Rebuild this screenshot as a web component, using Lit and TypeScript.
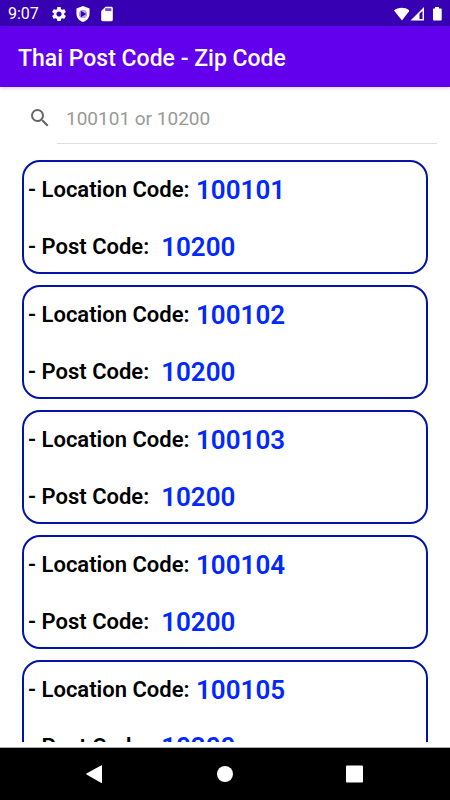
import { LitElement, html, css } from "lit";
import { customElement, property, state } from "lit/decorators.js";

interface Place {
  location: string;
  post: string;
}

const PLACES: Place[] = [
  { location: "100101", post: "10200" },
  { location: "100102", post: "10200" },
  { location: "100103", post: "10200" },
  { location: "100104", post: "10200" },
  { location: "100105", post: "10200" },
];

@customElement("status-bar")
class StatusBar extends LitElement {
  static styles = css`
    :host {
      display: flex;
      align-items: center;
      justify-content: space-between;
      height: 26px;
      flex: none;
      box-sizing: border-box;
      padding: 2px 8px 0;
      background: #3700b3;
      color: #fff;
      font-size: 16px;
      line-height: 24px;
    }
    .left,
    .right {
      display: flex;
      align-items: center;
    }
    .time {
      margin-right: 12px;
    }
    .note {
      width: 16px;
      height: 16px;
      margin-right: 8px;
    }
    .sys {
      width: 16px;
      height: 16px;
    }
    .battery {
      width: 10px;
      height: 16px;
      margin-left: 7px;
    }
    svg {
      display: block;
      fill: currentColor;
    }
  `;

  render() {
    return html`
      <div class="left">
        <span class="time">9:07</span>
        <svg class="note" viewBox="1 1 22 22" aria-hidden="true">
          <path d="M19.14 12.94c.04-.3.06-.61.06-.94 0-.32-.02-.64-.07-.94l2.03-1.58c.18-.14.23-.41.12-.61l-1.92-3.32c-.12-.22-.37-.29-.59-.22l-2.39.96c-.5-.38-1.03-.7-1.62-.94l-.36-2.54c-.04-.24-.24-.41-.48-.41h-3.84c-.24 0-.43.17-.47.41l-.36 2.54c-.59.24-1.13.57-1.62.94l-2.39-.96c-.22-.08-.47 0-.59.22L2.74 8.87c-.12.21-.08.47.12.61l2.03 1.58c-.05.3-.09.63-.09.94s.02.64.07.94l-2.03 1.58c-.18.14-.23.41-.12.61l1.92 3.32c.12.22.37.29.59.22l2.39-.96c.5.38 1.03.7 1.62.94l.36 2.54c.05.24.24.41.48.41h3.84c.24 0 .44-.17.47-.41l.36-2.54c.59-.24 1.13-.56 1.62-.94l2.39.96c.22.08.47 0 .59-.22l1.92-3.32c.12-.22.07-.47-.12-.61l-2.01-1.58zM12 15.6c-1.98 0-3.6-1.62-3.6-3.6s1.62-3.6 3.6-3.6 3.6 1.62 3.6 3.6-1.62 3.6-3.6 3.6z"/>
        </svg>
        <svg class="note" viewBox="1 1 22 22" aria-hidden="true">
          <path fill-rule="evenodd" d="M12 1L3 4.500v7c0 5.300 3.800 9.900 9 11.500 5.200-1.600 9-6.200 9-11.500v-7L12 1zM12 6.500a5.500 5.500 0 1 0 .01 0z"/>
          <path fill="#fff" fill-opacity=".65" d="M12 6.500a5.500 5.500 0 1 0 .01 0z"/>
          <path fill="#3700b3" d="M9 7.500v9l7.500-4.500z"/>
        </svg>
        <svg class="note" viewBox="1 1 22 22" aria-hidden="true">
          <path d="M18 2h-8L4 8v12c0 1.100.9 2 2 2h12c1.100 0 2-.9 2-2V4c0-1.100-.9-2-2-2z"/>
          <path fill="#3700b3" fill-opacity=".7" d="M9.500 4h8.500v4H9.500z"/>
        </svg>
      </div>
      <div class="right">
        <svg class="sys" viewBox="0 0 16 16" aria-hidden="true">
          <path d="M1 4.500C5 .9 12 .9 16.500 4.500L9 14.500z"/>
        </svg>
        <svg class="sys" viewBox="0 0 16 16" aria-hidden="true">
          <path fill-rule="evenodd" d="M1.500 14.500L15 1v13.500zM10.500 7.500V13H13.500V5z"/>
        </svg>
        <svg class="battery" viewBox="0 0 10 16" aria-hidden="true">
          <path d="M3 1h4v1.500h2c.4 0 .7.300.7.700v10.600c0 .4-.3.700-.7.700H1.700c-.4 0-.7-.3-.7-.7V3.200c0-.4.300-.7.700-.7H3z"/>
        </svg>
      </div>
    `;
  }
}

@customElement("code-card")
class CodeCard extends LitElement {
  @property({ attribute: false }) place!: Place;

  static styles = css`
    :host {
      display: block;
      border: 2px solid #0014a8;
      border-radius: 18px;
      padding: 8px 4px 5px;
      background: #fff;
    }
    dl {
      display: grid;
      row-gap: 17px;
      margin: 0;
    }
    .row {
      display: flex;
      align-items: center;
      column-gap: 1px;
      line-height: 40px;
      font-weight: 600;
    }
    dt {
      color: #000;
      font-size: 22px;
      white-space: pre;
    }
    dd {
      margin: 0;
      color: #0028ff;
      font-size: 26px;
    }
  `;

  render() {
    return html`
      <dl>
        <div class="row">
          <dt>- Location Code: </dt>
          <dd>${this.place.location}</dd>
        </div>
        <div class="row">
          <dt>- Post Code:  </dt>
          <dd>${this.place.post}</dd>
        </div>
      </dl>
    `;
  }
}

@customElement("app-root")
class AppRoot extends LitElement {
  @state() private query = "";

  static styles = css`
    :host {
      display: flex;
      flex-direction: column;
      height: 100vh;
      overflow: hidden;
      background: #fff;
      font-family: Roboto, "Liberation Sans", sans-serif;
    }
    .bar {
      flex: none;
      height: 61px;
      padding: 0 18px;
      background: #6200ee;
      box-shadow: 0 1px 4px rgba(0, 0, 0, 0.2);
    }
    h1 {
      margin: 0;
      color: #fff;
      font-size: 23px;
      font-weight: 500;
      line-height: 65px;
    }
    .search {
      flex: none;
      display: flex;
      align-items: center;
      height: 57px;
      margin: 0 13px 0 28px;
    }
    .search svg {
      flex: none;
      width: 24px;
      height: 24px;
      margin: 4px 5px 0 0;
      fill: #666;
    }
    .search input {
      flex: 1;
      min-width: 0;
      box-sizing: border-box;
      height: 57px;
      padding: 7px 9px 0;
      border: 0;
      border-bottom: 1px solid #dedede;
      outline: 0;
      background: none;
      color: #222;
      font: 400 19px Roboto, "Liberation Sans", sans-serif;
    }
    .search input::placeholder {
      color: #999;
      opacity: 1;
    }
    .list {
      flex: 1;
      min-height: 0;
      display: flex;
      flex-direction: column;
      gap: 11px;
      margin: 16px 22px 5px;
      overflow: hidden;
    }
    .list code-card {
      flex: none;
    }
    nav {
      flex: none;
      display: flex;
      align-items: center;
      justify-content: center;
      gap: 82px;
      height: 52px;
      border-top: 1px solid #aaa;
      background: #000;
    }
    nav button {
      width: 48px;
      height: 48px;
      padding: 0;
      border: 0;
      background: none;
      color: #fff;
    }
    nav svg {
      display: block;
      width: 20px;
      height: 20px;
      margin: 0 auto;
      fill: currentColor;
    }
  `;

  private onInput(e: Event) {
    this.query = (e.target as HTMLInputElement).value.trim();
  }

  render() {
    const shown = PLACES.filter(
      (p) => p.location.includes(this.query) || p.post.includes(this.query)
    );
    return html`
      <status-bar></status-bar>
      <header class="bar"><h1>Thai Post Code - Zip Code</h1></header>
      <div class="search">
        <svg viewBox="0 0 24 24" aria-hidden="true">
          <path d="M15.500 14h-.79l-.28-.27A6.471 6.471 0 0 0 16 9.500 6.500 6.500 0 1 0 9.500 16c1.610 0 3.090-.59 4.230-1.570l.27.28v.79l5 4.990L20.490 19l-4.990-5zm-6 0C7.010 14 5 11.990 5 9.500S7.010 5 9.500 5 14 7.010 14 9.500 11.990 14 9.500 14z"/>
        </svg>
        <input type="text" aria-label="Search codes" placeholder="100101 or 10200" @input=${this.onInput} />
      </div>
      <main class="list">
        ${shown.map((p) => html`<code-card .place=${p}></code-card>`)}
      </main>
      <nav>
        <button aria-label="Back">
          <svg viewBox="0 0 20 20"><path d="M17 1.500v17.200q0 .6-.6.300L1.500 10.600q-.6-.5 0-1L16.400 1.200q.6-.3.600.3z"/></svg>
        </button>
        <button aria-label="Home">
          <svg viewBox="0 0 20 20"><circle cx="10" cy="10" r="8"/></svg>
        </button>
        <button aria-label="Recents">
          <svg viewBox="0 0 20 20"><rect x="1" y="1.500" width="17" height="17" rx="1"/></svg>
        </button>
      </nav>
    `;
  }
}
